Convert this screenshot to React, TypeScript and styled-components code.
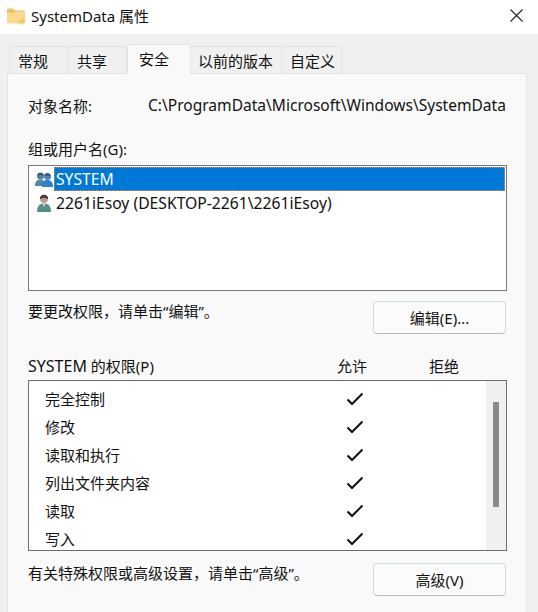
import React from "react";
import styled, { createGlobalStyle } from "styled-components";

const GlobalStyle = createGlobalStyle`
  html, body {
    margin: 0;
    padding: 0;
    background: #f0f0f0;
  }
  body {
    font-family: "Noto Sans", "Noto Sans CJK SC", sans-serif;
    font-size: 15px;
    color: #111;
  }
`;

const Window = styled.div`
  width: 538px;
  height: 612px;
  display: flex;
  flex-direction: column;
  overflow: hidden;
  background: #f0f0f0;
`;

const TitleBar = styled.div`
  height: 34px;
  flex: none;
  box-sizing: border-box;
  display: flex;
  align-items: center;
  padding: 0 15px 3px 7px;
  gap: 6px;
  background: #ffffff;
`;

const TitleText = styled.div`
  flex: 1;
  font-size: 15px;
  line-height: 20px;
  color: #111;
`;

const Tabs = styled.div`
  height: 40px;
  flex: none;
  display: flex;
  align-items: flex-end;
  padding: 0 0 0 9px;
  margin-bottom: -1px;
  position: relative;
  z-index: 1;
`;

const Tab = styled.div<{ $width: number; $inset: number; $active?: boolean }>`
  width: ${(p) => p.$width}px;
  height: ${(p) => (p.$active ? 30 : 28)}px;
  box-sizing: border-box;
  display: flex;
  align-items: center;
  padding: ${(p) => (p.$active ? "0 0 2px" : "1px 0 0")};
  padding-left: ${(p) => p.$inset}px;
  white-space: nowrap;
  background: ${(p) => (p.$active ? "#f9f9f9" : "#f0f0f0")};
  border: 1px solid #e3e3e3;
  border-bottom: ${(p) => (p.$active ? "none" : "1px solid #e3e3e3")};
  border-left: ${(p) => (p.$active ? "1px solid #e3e3e3" : "none")};
  border-radius: 2px 2px 0 0;
  &:first-child {
    border-left: 1px solid #e3e3e3;
  }
`;

const Panel = styled.div`
  flex: 1;
  margin: 0 11px 0 7px;
  box-sizing: border-box;
  background: #f9f9f9;
  border: 1px solid #e5e5e5;
  border-bottom: none;
  padding: 20px 19px 0 20px;
  display: flex;
  flex-direction: column;
`;

const NameRow = styled.div`
  display: flex;
  height: 22px;
  align-items: center;
  white-space: nowrap;
`;

const NameLabel = styled.div`
  width: 120px;
  flex: none;
`;

const NamePath = styled.div`
  font-size: 15.56px;
`;

const SectionLabel = styled.div`
  height: 22px;
  line-height: 22px;
  margin-top: 22px;
  white-space: nowrap;
`;

const UserList = styled.div`
  height: 126px;
  margin-top: 5px;
  width: 479px;
  box-sizing: border-box;
  background: #fff;
  border: 1px solid #7a7a7a;
  padding: 1px 1px 0 5px;
`;

const UserRow = styled.div`
  height: 24px;
  display: flex;
  align-items: center;
`;

const IconSlot = styled.div`
  width: 20px;
  flex: none;
  display: flex;
  justify-content: center;
`;

const UserName = styled.div<{ $selected?: boolean }>`
  flex: 1;
  height: 24px;
  line-height: 25px;
  padding-left: 2px;
  font-size: 15.7px;
  background: ${(p) => (p.$selected ? "#0078d7" : "transparent")};
  color: ${(p) => (p.$selected ? "#fff" : "#111")};
  outline: ${(p) => (p.$selected ? "1px dotted #ff8c1a" : "none")};
  outline-offset: -1px;
  white-space: nowrap;
`;

const ActionRow = styled.div<{ $top: number }>`
  display: flex;
  justify-content: space-between;
  align-items: flex-start;
  width: 478px;
  margin-top: ${(p) => p.$top}px;
`;

const Hint = styled.div`
  line-height: 22px;
  white-space: nowrap;
`;

const ActionButton = styled.button`
  width: 133px;
  height: 33px;
  margin-top: 1px;
  padding: 0;
  box-sizing: border-box;
  background: #fbfbfb;
  border: 1px solid #cfdde6;
  border-bottom-color: #b9bcbf;
  border-radius: 4px;
  font: inherit;
  color: #111;
`;

const PermHeader = styled.div`
  display: grid;
  grid-template-columns: 309px 92px 30px;
  height: 22px;
  line-height: 22px;
  margin-top: 21px;
  white-space: nowrap;
`;

const Latin = styled.span`
  font-size: 16px;
`;

const PermBox = styled.div`
  width: 479px;
  height: 171px;
  margin-top: 3px;
  box-sizing: border-box;
  background: #fff;
  border: 1px solid #6e6e6e;
  display: flex;
  overflow: hidden;
`;

const PermRows = styled.div`
  flex: 1;
  padding: 3px 0 0 16px;
`;

const PermRow = styled.div`
  height: 28px;
  display: flex;
  align-items: center;
  white-space: nowrap;
`;

const PermName = styled.div`
  width: 301px;
`;

const CheckMark = styled.svg`
  margin-top: 1px;
`;

const Scrollbar = styled.div`
  width: 20px;
  flex: none;
  background: #f0f0f0;
  padding: 21px 0 0 7px;
  box-sizing: border-box;
`;

const ScrollThumb = styled.div`
  width: 6px;
  height: 105px;
  background: #8a8a8a;
`;

const FolderIcon = () => (
  <svg width="18" height="16" viewBox="0 0 18 16">
    <path d="M0 2a1.500 1.500 0 0 1 1.500-1.500h4.300L7.800 2.500h8.700A1.500 1.500 0 0 1 18 4v2H0z" fill="#f3bd62" />
    <path d="M0 4.500h6.800L8.500 3.500h8A1.500 1.500 0 0 1 18 5v9a1.500 1.500 0 0 1-1.500 1.500h-15A1.500 1.500 0 0 1 0 14z" fill="#fcd98c" />
    <path d="M10 15.500l7.500-7v6a1 1 0 0 1-1 1z" fill="#f4bd63" opacity="0.7" />
  </svg>
);

const CloseIcon = () => (
  <svg width="13" height="13" viewBox="0 0 13 13">
    <path d="M0.500 0.500l12 12M12.500 0.500l-12 12" stroke="#222" strokeWidth="1.100" fill="none" />
  </svg>
);

const GroupIcon = () => (
  <svg width="18" height="15" viewBox="0 0 18 15">
    <circle cx="5.500" cy="4" r="3.500" fill="#53809c" />
    <path d="M0 14c0-4.500 2-6.500 5.500-6.500S10.500 9.500 10.500 14z" fill="#4c8ba3" />
    <path d="M2.300 3.500a3.300 3.300 0 0 1 6.400 0c-2-0.800-4.400-0.800-6.400 0z" fill="#36556e" />
    <circle cx="12.500" cy="4.500" r="3.500" fill="#4a86c0" />
    <path d="M7 15c0-5 2-7 5.500-7S18 10 18 15z" fill="#2f80d2" />
    <path d="M9.300 4a3.300 3.300 0 0 1 6.400 0c-2-0.800-4.400-0.800-6.400 0z" fill="#2c4f73" />
  </svg>
);

const UserIcon = () => (
  <svg width="14" height="18" viewBox="0 0 14 18">
    <circle cx="7" cy="5" r="4" fill="#b9a08c" />
    <path d="M2.800 5a4.200 4.200 0 0 1 8.400 0c-2.500-1.500-5.900-1.500-8.400 0z" fill="#3b3346" />
    <path d="M4.500 1.800l4 1.200-1 1.200z" fill="#a5473f" />
    <path d="M0 18c0-6 2.500-8.500 7-8.500S14 12 14 18z" fill="#558f85" />
    <path d="M5.400 9.500h3.200L7 13z" fill="#dcdcdc" />
  </svg>
);

const CheckIcon = () => (
  <CheckMark width="18" height="14" viewBox="0 0 18 14">
    <path d="M1.500 7.500l4.500 4.500L16.500 1.500" stroke="#111" strokeWidth="2" fill="none" />
  </CheckMark>
);

const tabs = [
  { label: "常规", width: 59, inset: 8 },
  { label: "共享", width: 59, inset: 9 },
  { label: "安全", width: 64, inset: 11, active: true },
  { label: "以前的版本", width: 91, inset: 7 },
  { label: "自定义", width: 60, inset: 8 },
];

const permissions = ["完全控制", "修改", "读取和执行", "列出文件夹内容", "读取", "写入"];

export default function App() {
  return (
    <Window>
      <GlobalStyle />
      <TitleBar>
        <FolderIcon />
        <TitleText>SystemData 属性</TitleText>
        <CloseIcon />
      </TitleBar>
      <Tabs>
        {tabs.map((t) => (
          <Tab key={t.label} $width={t.width} $inset={t.inset} $active={t.active}>
            {t.label}
          </Tab>
        ))}
      </Tabs>
      <Panel>
        <NameRow>
          <NameLabel>对象名称:</NameLabel>
          <NamePath>C:\ProgramData\Microsoft\Windows\SystemData</NamePath>
        </NameRow>
        <SectionLabel>组或用户名(G):</SectionLabel>
        <UserList>
          <UserRow>
            <IconSlot>
              <GroupIcon />
            </IconSlot>
            <UserName $selected>SYSTEM</UserName>
          </UserRow>
          <UserRow>
            <IconSlot>
              <UserIcon />
            </IconSlot>
            <UserName>2261iEsoy (DESKTOP-2261\2261iEsoy)</UserName>
          </UserRow>
        </UserList>
        <ActionRow $top={9}>
          <Hint>要更改权限，请单击“编辑”。</Hint>
          <ActionButton>编辑(E)...</ActionButton>
        </ActionRow>
        <PermHeader>
          <div>
            <Latin>SYSTEM</Latin> 的权限(P)
          </div>
          <div>允许</div>
          <div>拒绝</div>
        </PermHeader>
        <PermBox>
          <PermRows>
            {permissions.map((p) => (
              <PermRow key={p}>
                <PermName>{p}</PermName>
                <CheckIcon />
              </PermRow>
            ))}
          </PermRows>
          <Scrollbar>
            <ScrollThumb />
          </Scrollbar>
        </PermBox>
        <ActionRow $top={11}>
          <Hint>有关特殊权限或高级设置，请单击“高级”。</Hint>
          <ActionButton>高级(V)</ActionButton>
        </ActionRow>
      </Panel>
    </Window>
  );
}
